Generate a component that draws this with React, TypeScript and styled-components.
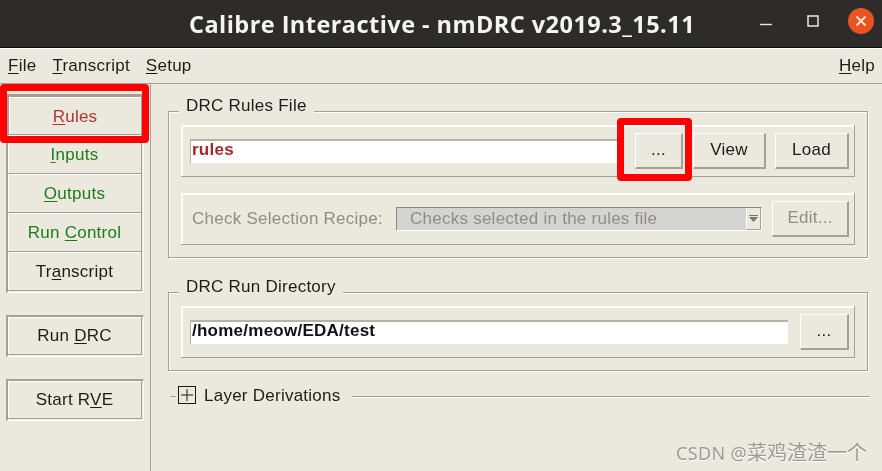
import React from "react";
import styled, { createGlobalStyle } from "styled-components";

const BG = "#ebe9dd";
const DARK = "#a3a195";

const Global = createGlobalStyle`
  html, body { margin: 0; padding: 0; background: ${BG}; }
  #root { width: 882px; height: 471px; overflow: hidden; }
`;

const Page = styled.div`
  position: relative;
  width: 882px;
  height: 471px;
  overflow: hidden;
  display: flex;
  flex-direction: column;
  background: ${BG};
  color: #1c1c1c;
  font-family: "Liberation Sans", Arial, sans-serif;
  font-size: 17px;
  letter-spacing: 0.25px;
  filter: blur(0.35px);
`;

const TitleBar = styled.header`
  height: 47px;
  flex: none;
  display: flex;
  align-items: center;
  background: #2e2c2b;
  border-bottom: 1px solid #0e0e0e;
  padding-left: 189px;
`;

const Title = styled.h1`
  margin: 0;
  width: 540px;
  color: #f4f4f2;
  font-family: "Open Sans", "Noto Sans", sans-serif;
  font-size: 23.5px;
  font-weight: 700;
  letter-spacing: 0.45px;
  white-space: nowrap;
`;

const WindowButtons = styled.div`
  display: flex;
  align-items: center;
  margin-left: 27px;
  margin-bottom: 5px;
  gap: 35px;
`;

const MinIcon = styled.svg`
  margin-left: 4px;
`;

const CloseCircle = styled.span`
  width: 26px;
  height: 26px;
  margin-left: -6px;
  border-radius: 50%;
  background: #e95420;
  display: flex;
  align-items: center;
  justify-content: center;
`;

const MenuBar = styled.nav`
  height: 35px;
  flex: none;
  display: flex;
  align-items: center;
  padding: 0 7px 0 8px;
  gap: 16px;
  border-bottom: 1px solid ${DARK};
  box-shadow: inset 0 1px 0 #fff;
`;

const MenuItem = styled.span<{ $right?: boolean }>`
  margin-left: ${(p) => (p.$right ? "auto" : "0")};
`;

const Key = styled.span`
  text-decoration: underline;
  text-underline-offset: 2px;
`;

const Body = styled.div`
  flex: 1;
  display: flex;
  min-height: 0;
`;

const Sidebar = styled.aside`
  width: 151px;
  flex: none;
  box-sizing: border-box;
  border-right: 1px solid ${DARK};
  padding: 10px 6px 0 6px;
  display: flex;
  flex-direction: column;
  gap: 22px;
`;

const Ridge = styled.div`
  border-top: 2px solid ${DARK};
  border-left: 2px solid ${DARK};
  border-right: 1px solid #fff;
  border-bottom: 1px solid #fff;
  padding: 0 1px 1px 0;
`;

const Stack = styled(Ridge)`
  display: flex;
  flex-direction: column;
  height: 199px;
  box-sizing: border-box;
`;

const Tab = styled.button<{ $color?: string; $tall?: boolean }>`
  flex: none;
  width: 100%;
  height: ${(p) => (p.$tall ? "38px" : "39px")};
  display: block;
  box-sizing: border-box;
  padding: ${(p) => (p.$tall ? "0" : "2px")} 0 0;
  border: 0;
  border-right: 1px solid ${DARK};
  border-bottom: 1px solid ${DARK};
  background: ${BG};
  box-shadow: inset 1px 1px 0 #fff;
  color: ${(p) => p.$color ?? "#1c1c1c"};
  font: inherit;
  letter-spacing: inherit;
`;

const ActiveTab = styled(Tab)`
  padding-top: 3px;
  border-top: 1px solid ${DARK};
  border-left: 1px solid ${DARK};
`;

const Main = styled.main`
  flex: 1;
  min-width: 0;
  padding: 27px 14px 0 17px;
  display: flex;
  flex-direction: column;
`;

const Group = styled.section<{ $mt?: number }>`
  position: relative;
  margin-top: ${(p) => p.$mt ?? 0}px;
  border: 1px solid ${DARK};
  box-shadow: inset 1px 1px 0 #fff, 1px 1px 0 #fff;
  padding: 13px 12px 12px;
  display: flex;
  flex-direction: column;
  gap: 16px;
`;

const Legend = styled.h2`
  position: absolute;
  top: -18px;
  left: 10px;
  margin: 0;
  padding: 0 7px;
  background: ${BG};
  font: inherit;
  line-height: 24px;
`;

const Panel = styled.div<{ $h: number }>`
  height: ${(p) => p.$h}px;
  box-sizing: border-box;
  display: flex;
  align-items: center;
  padding: 0 5px 0 9px;
  border-right: 1px solid ${DARK};
  border-bottom: 1px solid ${DARK};
  box-shadow: inset 1px 1px 0 #fff, inset 2px 2px 0 #fff;
`;

const Entry = styled.div<{ $color?: string; $mr: number }>`
  flex: 1;
  height: 24px;
  box-sizing: border-box;
  margin-right: ${(p) => p.$mr}px;
  padding-left: 1px;
  background: #fff;
  border-top: 2px solid #b5b3a8;
  border-left: 1px solid #b5b3a8;
  color: ${(p) => p.$color ?? "#111"};
  font-weight: 700;
  letter-spacing: 0.25px;
  line-height: 18px;
`;

const Btn = styled.button<{ $w: number; $ml?: number; $h?: number; $muted?: boolean }>`
  flex: none;
  width: ${(p) => p.$w}px;
  height: ${(p) => p.$h ?? 36}px;
  margin-left: ${(p) => p.$ml ?? 0}px;
  padding: 0;
  background: ${BG};
  border: 1px solid #fff;
  border-right: 2px solid ${DARK};
  border-bottom: 2px solid ${DARK};
  color: ${(p) => (p.$muted ? "#8f8e86" : "#1c1c1c")};
  font: inherit;
  letter-spacing: inherit;
`;

const Muted = styled.span`
  color: #8f8e86;
  margin-left: 2px;
  width: 204px;
  flex: none;
  white-space: nowrap;
`;

const Combo = styled.div`
  width: 366px;
  height: 24px;
  flex: none;
  box-sizing: border-box;
  display: flex;
  border-top: 1px solid #8b8a80;
  border-left: 1px solid #8b8a80;
  border-right: 1px solid #fff;
  border-bottom: 1px solid #fff;
  background: #d4d4d2;
  color: #8f8e86;
  padding-left: 13px;
  line-height: 22px;
  white-space: nowrap;
`;

const ComboText = styled.span`
  flex: 1;
`;

const ComboArrow = styled.span`
  width: 15px;
  box-sizing: border-box;
  background: ${BG};
  border-left: 1px solid #fff;
  border-right: 1px solid ${DARK};
  border-bottom: 1px solid ${DARK};
  display: flex;
  align-items: center;
  justify-content: center;
`;

const Expander = styled.div`
  display: flex;
  align-items: center;
  margin-top: 16px;
  margin-left: 2px;
  height: 18px;
  margin-right: -2px;
`;

const Tick = styled.span`
  width: 6px;
  height: 1px;
  background: ${DARK};
  margin-right: 2px;
`;

const PlusBox = styled.span`
  width: 18px;
  height: 18px;
  margin-bottom: 2px;
  box-sizing: border-box;
  border: 1px solid #1a1a1a;
  display: flex;
  align-items: center;
  justify-content: center;
`;

const ExpanderLabel = styled.span`
  margin: 0 11px 0 8px;
  white-space: nowrap;
`;

const Rule = styled.span`
  flex: 1;
  height: 1px;
  background: ${DARK};
  box-shadow: 0 1px 0 #fff;
`;

const Highlight = styled.div<{ $x: number; $y: number; $w: number; $h: number }>`
  position: absolute;
  left: ${(p) => p.$x}px;
  top: ${(p) => p.$y}px;
  width: ${(p) => p.$w}px;
  height: ${(p) => p.$h}px;
  box-sizing: border-box;
  border: 7px solid #fe0000;
  border-radius: 4px;
`;

const Watermark = styled.div`
  position: absolute;
  right: 15px;
  bottom: 5px;
  color: #9b9a94;
  font-family: "Noto Sans", "Noto Sans CJK SC", sans-serif;
  font-size: 18px;
  letter-spacing: 0.35px;
  text-shadow: 0 1px 0 #fff;
`;

const WatermarkCjk = styled.span`
  font-size: 20px;
  letter-spacing: 0;
`;

export default function App() {
  return (
    <Page>
      <Global />
      <TitleBar>
        <Title>Calibre Interactive - nmDRC v2019.3_15.11</Title>
        <WindowButtons>
          <MinIcon width="12" height="12" viewBox="0 0 12 12">
            <path d="M0 9.5H12" stroke="#e8e8e8" strokeWidth="1.4" />
          </MinIcon>
          <svg width="12" height="12" viewBox="0 0 12 12">
            <rect x="1" y="1" width="10" height="10" fill="none" stroke="#e8e8e8" strokeWidth="1.5" />
          </svg>
          <CloseCircle>
            <svg width="12" height="12" viewBox="0 0 12 12">
              <path d="M1.5 1.5L10.5 10.5M10.5 1.5L1.5 10.5" stroke="#fbe6dc" strokeWidth="1.8" />
            </svg>
          </CloseCircle>
        </WindowButtons>
      </TitleBar>
      <MenuBar>
        <MenuItem><Key>F</Key>ile</MenuItem>
        <MenuItem><Key>T</Key>ranscript</MenuItem>
        <MenuItem><Key>S</Key>etup</MenuItem>
        <MenuItem $right><Key>H</Key>elp</MenuItem>
      </MenuBar>
      <Body>
        <Sidebar>
          <Stack>
            <ActiveTab $color="#b03434"><Key>R</Key>ules</ActiveTab>
            <Tab $color="#1c7c1c"><Key>I</Key>nputs</Tab>
            <Tab $color="#1c7c1c"><Key>O</Key>utputs</Tab>
            <Tab $color="#1c7c1c">Run <Key>C</Key>ontrol</Tab>
            <Tab>Tr<Key>a</Key>nscript</Tab>
          </Stack>
          <Ridge><Tab $tall>Run <Key>D</Key>RC</Tab></Ridge>
          <Ridge><Tab $tall>Start R<Key>V</Key>E</Tab></Ridge>
        </Sidebar>
        <Main>
          <Group>
            <Legend>DRC Rules File</Legend>
            <Panel $h={52}>
              <Entry $color="#a62a2a" $mr={15}>rules</Entry>
              <Btn $w={48}>...</Btn>
              <Btn $w={73} $ml={10}>View</Btn>
              <Btn $w={74} $ml={9}>Load</Btn>
            </Panel>
            <Panel $h={52}>
              <Muted>Check Selection Recipe:</Muted>
              <Combo>
                <ComboText>Checks selected in the rules file</ComboText>
                <ComboArrow>
                  <svg width="9" height="7" viewBox="0 0 9 7"><path d="M0 0H9V1H0ZM0 2H9L4.5 7Z" fill="#77766e" /></svg>
                </ComboArrow>
              </Combo>
              <Btn $w={77} $ml={10} $muted>Edit...</Btn>
            </Panel>
          </Group>
          <Group $mt={34}>
            <Legend>DRC Run Directory</Legend>
            <Panel $h={52}>
              <Entry $mr={12}>/home/meow/EDA/test</Entry>
              <Btn $w={49}>...</Btn>
            </Panel>
          </Group>
          <Expander>
            <Tick />
            <PlusBox>
              <svg width="12" height="12" viewBox="0 0 12 12">
                <path d="M6 0V12M0 6H12" stroke="#1a1a1a" strokeWidth="1" />
              </svg>
            </PlusBox>
            <ExpanderLabel>Layer Derivations</ExpanderLabel>
            <Rule />
          </Expander>
        </Main>
      </Body>
      <Highlight $x={0} $y={84} $w={149} $h={59} />
      <Highlight $x={617} $y={118} $w={75} $h={63} />
      <Watermark>CSDN @<WatermarkCjk>菜鸡渣渣一个</WatermarkCjk></Watermark>
    </Page>
  );
}
